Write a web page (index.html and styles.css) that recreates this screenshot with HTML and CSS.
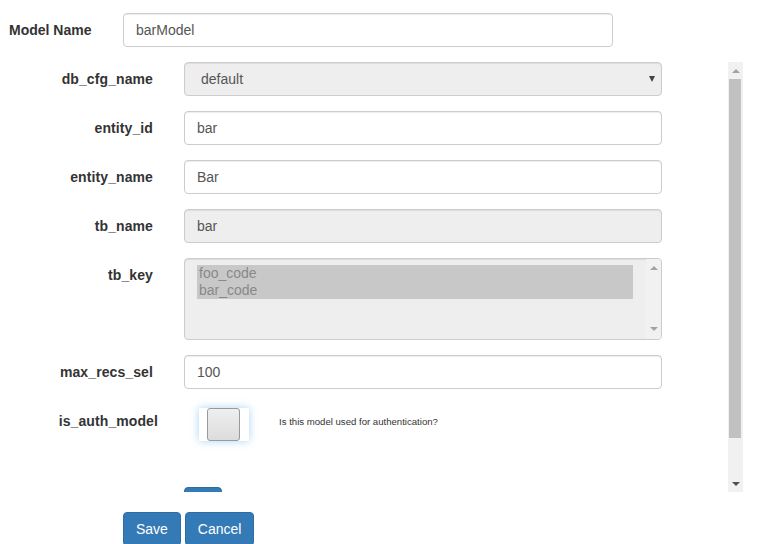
FILE: index.html
```html
<!DOCTYPE html>
<html>
<head>
<meta charset="utf-8">
<link rel="stylesheet" href="styles.css">
</head>
<body>
<form class="page">
  <div class="top-row">
    <label class="top-label">Model Name</label>
    <input class="control top-input" type="text" value="barModel">
  </div>

  <div class="scroll-area">
    <div class="scroll-content">
      <div class="row">
        <label class="row-label">db_cfg_name</label>
        <div class="control fake-select disabled">
          <span>default</span>
          <span class="caret"></span>
        </div>
      </div>
      <div class="row">
        <label class="row-label">entity_id</label>
        <input class="control" type="text" value="bar">
      </div>
      <div class="row">
        <label class="row-label">entity_name</label>
        <input class="control" type="text" value="Bar">
      </div>
      <div class="row">
        <label class="row-label">tb_name</label>
        <input class="control disabled" type="text" value="bar" readonly>
      </div>
      <div class="row">
        <label class="row-label">tb_key</label>
        <div class="multi">
          <div class="multi-options">
            <div class="opt">foo_code</div>
            <div class="opt">bar_code</div>
          </div>
          <div class="mini-bar">
            <span class="tri-up light"></span>
            <span class="tri-down light"></span>
          </div>
        </div>
      </div>
      <div class="row">
        <label class="row-label">max_recs_sel</label>
        <input class="control" type="text" value="100">
      </div>
      <div class="row row-check">
        <label class="row-label label-shift">is_auth_model</label>
        <div class="check-line">
          <div class="check-wrap"><div class="check-box"></div></div>
          <span class="help">Is this model used for authentication?</span>
        </div>
      </div>
      <div class="row">
        <span class="row-label"></span>
        <div><button type="button" class="btn btn-hidden" aria-label="Add"></button></div>
      </div>
    </div>
    <div class="scrollbar">
      <div class="sb-btn"><span class="tri-up light"></span></div>
      <div class="sb-thumb"></div>
      <div class="sb-track"></div>
      <div class="sb-btn"><span class="tri-down dark"></span></div>
    </div>
  </div>

  <div class="actions">
    <button type="button" class="btn">Save</button>
    <button type="button" class="btn">Cancel</button>
  </div>
</form>
</body>
</html>
```

FILE: styles.css
```css
* { box-sizing: border-box; }
html, body { margin: 0; padding: 0; background: #fff; }
body {
  font-family: "Liberation Sans", Arial, sans-serif;
  font-size: 14px;
  color: #333;
  width: 763px;
  height: 544px;
  overflow: hidden;
}
.page { margin: 0; }

.control {
  display: block;
  height: 34px;
  padding: 6px 12px;
  font-family: "Liberation Sans", Arial, sans-serif;
  font-size: 14px;
  line-height: 20px;
  color: #555;
  background: #fff;
  border: 1px solid #ccc;
  border-radius: 4px;
  box-shadow: inset 0 1px 1px rgba(0,0,0,.075);
  outline: none;
  width: 100%;
}
.control.disabled { background: #eee; }

.top-row {
  display: flex;
  align-items: center;
  padding-top: 13px;
}
.top-label {
  flex: 0 0 123px;
  width: 123px;
  padding-left: 9px;
  font-weight: bold;
  line-height: 20px;
}
.control.top-input { flex: 0 0 490px; width: 490px; }

.scroll-area {
  display: flex;
  width: 743px;
  height: 430px;
  margin-top: 15px;
}
.scroll-content {
  flex: 1;
  overflow: hidden;
}
.row {
  display: grid;
  grid-template-columns: 153px 478px;
  column-gap: 31px;
  margin-bottom: 15px;
}
.row-label {
  text-align: right;
  font-weight: bold;
  padding-top: 7px;
  line-height: 20px;
  color: #333;
  letter-spacing: 0.1px;
}
.label-shift { margin-right: -5px; }

.fake-select {
  display: flex;
  align-items: center;
  justify-content: space-between;
  padding-left: 16px;
  padding-right: 6px;
}
.caret {
  width: 0; height: 0;
  border-left: 3.5px solid transparent;
  border-right: 3.5px solid transparent;
  border-top: 6px solid #444;
}

.multi {
  display: flex;
  height: 82px;
  background: #eee;
  border: 1px solid #ccc;
  border-radius: 4px;
  box-shadow: inset 0 1px 1px rgba(0,0,0,.075);
  overflow: hidden;
}
.multi-options {
  flex: 1;
  padding: 6px 13px 0 12px;
}
.opt {
  height: 17px;
  line-height: 17px;
  padding-left: 2px;
  background: #c8c8c8;
  color: #888;
  font-size: 14px;
}
.mini-bar {
  width: 15px;
  background: #f1f1f1;
  display: flex;
  flex-direction: column;
  justify-content: space-between;
  align-items: center;
  padding: 7px 0 8px;
}

.tri-up, .tri-down {
  display: block;
  width: 0; height: 0;
  border-left: 4px solid transparent;
  border-right: 4px solid transparent;
}
.tri-up { border-bottom: 4px solid #a3a3a3; }
.tri-down { border-top: 4px solid #a3a3a3; }
.tri-up.dark { border-bottom-color: #505050; }
.tri-down.dark { border-top-color: #505050; }

.row-check { height: 68px; }
.check-line {
  display: flex;
  align-items: center;
  padding-left: 15px;
  padding-top: 4px;
  height: 37px;
}
.check-wrap {
  flex: 0 0 50px;
  width: 50px;
  height: 33px;
  background: #fff;
  box-shadow: 0 0 8px rgba(102,175,233,.55);
  padding-left: 8px;
}
.check-box {
  width: 33px;
  height: 33px;
  border: 1px solid #999;
  border-radius: 3px;
  background: linear-gradient(#efefef, #dcdcdc);
}
.help {
  font-size: 9.6px;
  margin-left: 30px;
  margin-bottom: 6px;
  color: #333;
  white-space: nowrap;
}

.scrollbar {
  width: 15px;
  margin-left: auto;
  background: #f1f1f1;
  display: flex;
  flex-direction: column;
}
.sb-btn {
  height: 17px;
  display: flex;
  align-items: center;
  justify-content: center;
}
.sb-thumb {
  height: 359px;
  margin: 0 2px 0 1px;
  background: #c1c1c1;
}
.sb-track { flex: 1; }

.btn {
  display: inline-block;
  height: 34px;
  padding: 6px 12px;
  font-family: "Liberation Sans", Arial, sans-serif;
  font-size: 14px;
  line-height: 20px;
  color: #fff;
  background: #337ab7;
  border: 1px solid #2e6da4;
  border-radius: 4px;
  cursor: pointer;
}
.btn-hidden { width: 38px; }

.actions {
  margin-top: 20px;
  padding-left: 123px;
}
```
